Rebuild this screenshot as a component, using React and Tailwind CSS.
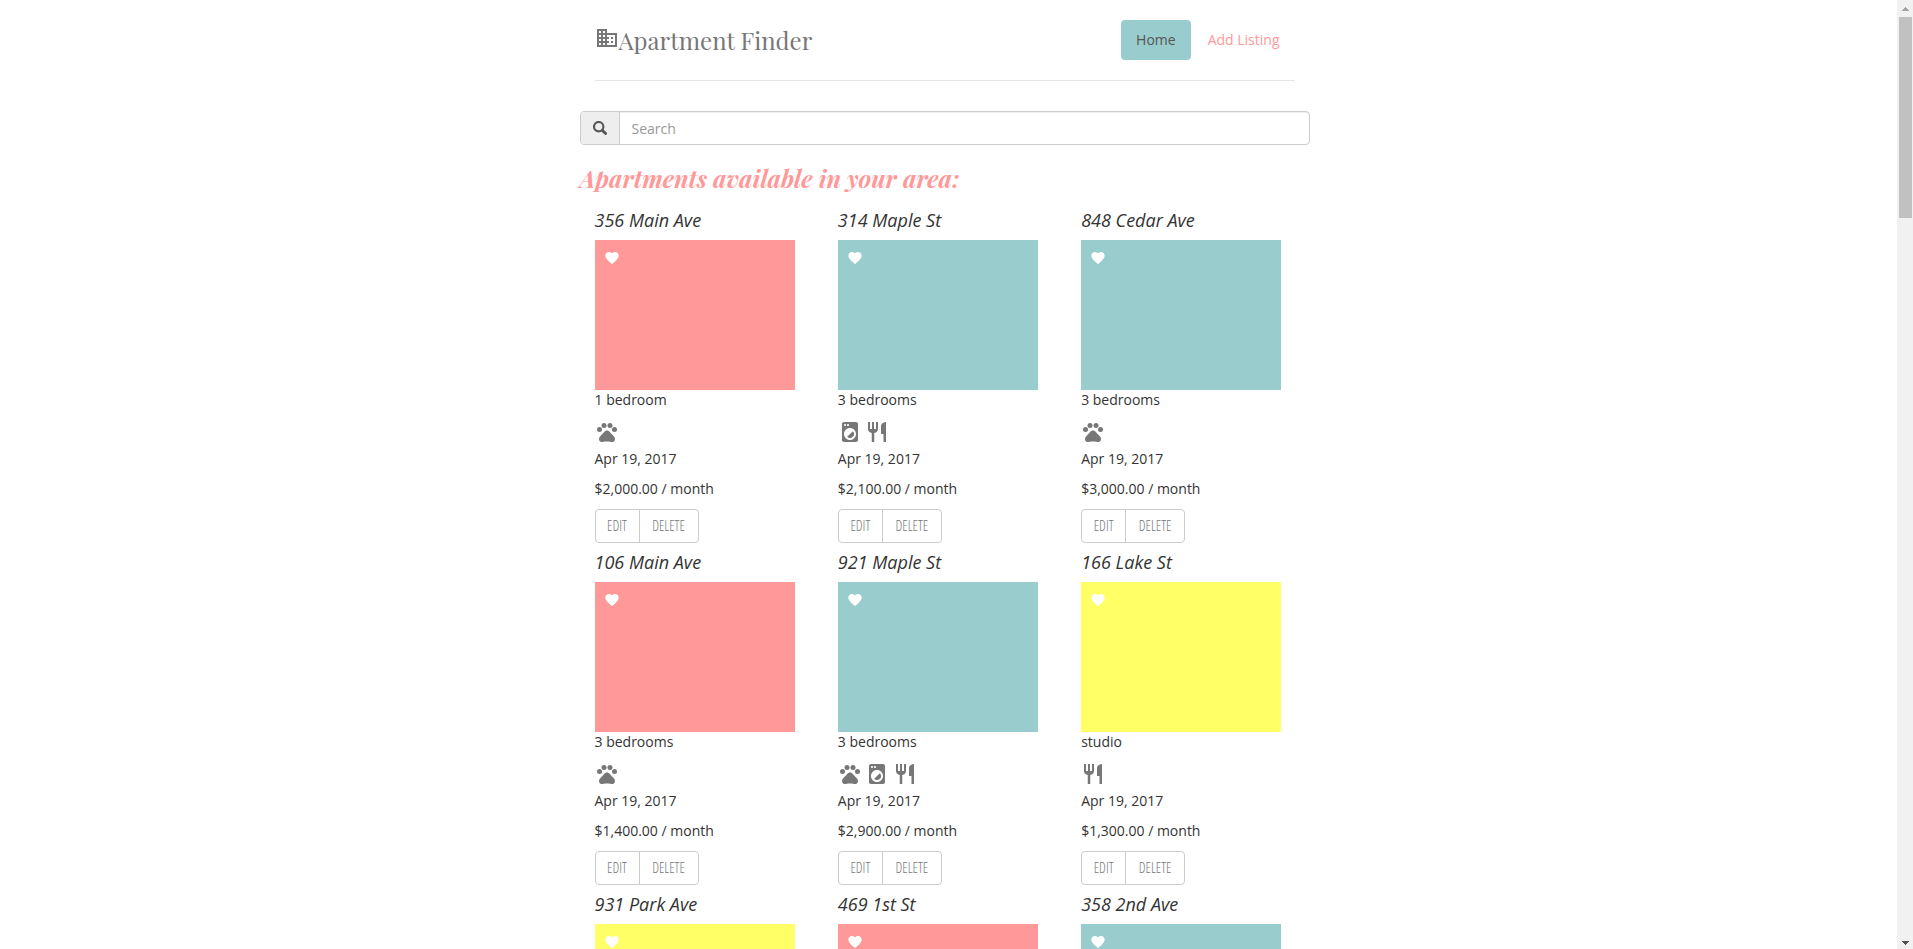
import React from "react";
import { MdBusiness, MdPets, MdLocalLaundryService, MdRestaurant, MdFavorite } from "react-icons/md";

const amenityIcons = {
  pets: { Icon: MdPets, label: "Pets allowed" },
  laundry: { Icon: MdLocalLaundryService, label: "Laundry" },
  kitchen: { Icon: MdRestaurant, label: "Kitchen" },
};

const colors = {
  pink: "bg-[#ff9999]",
  teal: "bg-[#99cccc]",
  yellow: "bg-[#ffff66]",
};

const listings = [
  { title: "356 Main Ave", color: "pink", rooms: "1 bedroom", amenities: ["pets"], price: "$2,000.00" },
  { title: "314 Maple St", color: "teal", rooms: "3 bedrooms", amenities: ["laundry", "kitchen"], price: "$2,100.00" },
  { title: "848 Cedar Ave", color: "teal", rooms: "3 bedrooms", amenities: ["pets"], price: "$3,000.00" },
  { title: "106 Main Ave", color: "pink", rooms: "3 bedrooms", amenities: ["pets"], price: "$1,400.00" },
  { title: "921 Maple St", color: "teal", rooms: "3 bedrooms", amenities: ["pets", "laundry", "kitchen"], price: "$2,900.00" },
  { title: "166 Lake St", color: "yellow", rooms: "studio", amenities: ["kitchen"], price: "$1,300.00" },
  { title: "931 Park Ave", color: "yellow" },
  { title: "469 1st St", color: "pink" },
  { title: "358 2nd Ave", color: "teal" },
];

function SearchIcon() {
  return (
    <svg viewBox="0 0 14 14" className="size-[14px]" fill="none" stroke="currentColor" aria-hidden="true">
      <circle cx="5.7" cy="5.7" r="4.7" strokeWidth="2.1" />
      <path d="M9.2 9.2l3.4 3.4" strokeWidth="2.8" strokeLinecap="round" />
    </svg>
  );
}

function Header() {
  return (
    <header className="mx-[15px] flex h-[81px] items-start justify-between border-b border-[#e5e5e5] pt-5">
      <h1 className="flex h-10 items-center text-[#777]">
        <MdBusiness className="mb-1 size-6 shrink-0" aria-hidden="true" />
        <span className="font-['Playfair_Display','Liberation_Serif',serif] text-[24px] leading-10">
          Apartment Finder
        </span>
      </h1>
      <nav className="flex gap-[2px]">
        <a href="#home" className="rounded bg-[#99cccc] px-[15px] py-[10px] text-[#555]">Home</a>
        <a href="#add" className="rounded px-[15px] py-[10px] text-[#ff9999]">Add Listing</a>
      </nav>
    </header>
  );
}

function SearchBox() {
  return (
    <div className="mt-[30px] flex h-[34px] rounded border border-[#ccc]">
      <label
        htmlFor="search"
        className="flex w-[39px] shrink-0 items-center justify-center rounded-l-[3px] border-r border-[#ccc] bg-[#eee] text-[#555]"
      >
        <SearchIcon />
      </label>
      <input
        id="search"
        type="text"
        aria-label="Search"
        placeholder="Search"
        className="min-w-0 flex-1 rounded-r-[3px] px-3 pt-[2px] text-[#555] shadow-[inset_0_1px_1px_rgba(0,0,0,0.075)] placeholder:text-[#999] outline-none"
      />
    </div>
  );
}

function Listing({ item }) {
  return (
    <article className="px-[15px] pb-[9px]">
      <h3 className="text-[18px] leading-5 italic">{item.title}</h3>
      <div className={`mt-[10px] h-[150px] w-[200px] pt-[10px] pl-[9px] text-white ${colors[item.color]}`}>
        <button type="button" aria-label={`Favorite ${item.title}`} className="block">
          <MdFavorite className="size-4" />
        </button>
      </div>
      {item.rooms && (
        <>
          <p>{item.rooms}</p>
          <p className="mt-[10px] h-[29px] text-[#777]">
            {item.amenities.map((name) => {
              const { Icon, label } = amenityIcons[name];
              return (
                <React.Fragment key={name}>
                  <Icon className="inline-block size-6 align-top" title={label} />{" "}
                </React.Fragment>
              );
            })}
          </p>
          <p>Apr 19, 2017</p>
          <p className="mt-[10px]">{item.price} / month</p>
          <div className="mt-[10px] inline-flex h-[34px] rounded border border-[#ccc] align-top font-['Open_Sans_Condensed_Light','Open_Sans_Condensed','Open_Sans',sans-serif] text-[14px] font-light text-[#777]">
            <button type="button" className="w-11 border-r border-[#ccc]">EDIT</button>
            <button type="button" className="w-[58px]">DELETE</button>
          </div>
        </>
      )}
    </article>
  );
}

function Scrollbar() {
  return (
    <div className="flex w-4 shrink-0 flex-col items-center bg-[#f1f1f1]" aria-hidden="true">
      <svg viewBox="0 0 16 17" className="h-[17px] w-4 shrink-0 fill-[#a3a3a3]">
        <path d="M8 7h1v1h1v1h1v1h1v1H5v-1h1V9h1V8h1z" />
      </svg>
      <div className="h-[201px] w-[13px] bg-[#c1c1c1]" />
      <svg viewBox="0 0 16 17" className="mt-auto h-[17px] w-4 shrink-0 fill-[#505050]">
        <path d="M5 9h7v1h-1v1h-1v1H9v1H8v-1H7v-1H6v-1H5z" />
      </svg>
    </div>
  );
}

export default function App() {
  return (
    <div className="flex h-screen overflow-hidden bg-white font-['Open_Sans',sans-serif] text-[14px] leading-5 text-[#333]">
      <div className="min-w-0 flex-1 overflow-hidden pr-2">
        <div className="mx-auto max-w-[730px]">
          <Header />
          <SearchBox />
          <main>
            <h2 className="mt-[18px] mb-[17px] font-['Playfair_Display','Liberation_Serif',serif] text-[24px] leading-[30px] font-bold text-[#ff9999] italic">
              Apartments available in your area:
            </h2>
            <div className="grid grid-cols-3">
              {listings.map((item) => (
                <Listing key={item.title} item={item} />
              ))}
            </div>
          </main>
        </div>
      </div>
      <Scrollbar />
    </div>
  );
}
